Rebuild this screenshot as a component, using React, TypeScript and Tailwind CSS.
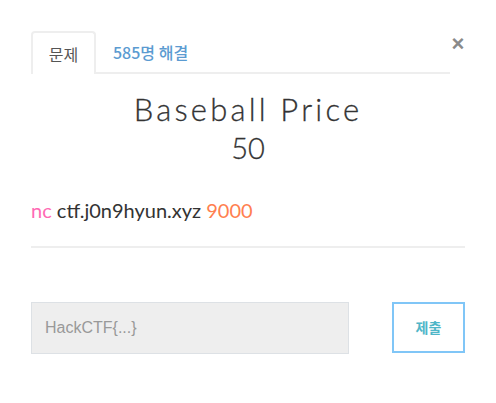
const ChallengeModal = () => {
  return (
    <div className="w-[496px] h-[403px] bg-white px-[31px] pt-[31px] font-['Lato','Noto_Sans_CJK_KR',sans-serif]">
      <div className="flex">
        <ul className="flex flex-1 border-b-2 border-[#eeeeee]">
          <li className="-mb-[2px] flex h-[43px] w-[65px] items-center justify-center rounded-t border-2 border-b-0 border-[#eeeeee] bg-white text-[16px] text-[#555555] font-['Noto_Sans_CJK_KR',sans-serif]">
            문제
          </li>
          <li className="flex h-[41px] items-center pl-[17px] text-[16px] font-medium text-[#5b9bd1] font-['Noto_Sans_CJK_KR',sans-serif]">
            585명 해결
          </li>
        </ul>
        <button className="ml-[1px] h-[24px] w-[14px] pt-[2px] text-[22px] font-bold leading-[20px] text-[#8a8a8a] font-['Liberation_Sans',sans-serif]">
          ×
        </button>
      </div>

      <h3 className="mt-[17px] text-center text-[31px] font-light leading-[36px] tracking-[3.2px] text-[#333333] [-webkit-text-stroke:0.3px_#333333]">
        Baseball Price
      </h3>
      <p className="mt-[4px] text-center text-[29px] font-light leading-[34px] text-[#333333] [-webkit-text-stroke:0.3px_#333333]">50</p>

      <p className="mt-[33px] text-[20px] leading-[24px] text-[#333333]">
        <span className="text-[#ff69b4]">nc</span> ctf.j0n9hyun.xyz{' '}
        <span className="text-[#ff7f50]">9000</span>
      </p>
      <hr className="mt-[24px] border-t-2 border-[#eeeeee]" />

      <form className="mt-[54px] flex items-start justify-between" onSubmit={(e) => e.preventDefault()}>
        <input
          title="flag"
          type="text"
          placeholder="HackCTF{...}"
          className="h-[52px] w-[318px] border border-[#dde1e5] bg-[#eeeeee] px-[13px] text-[16px] text-[#555555] outline-none placeholder:text-[#999999] font-['Liberation_Sans',sans-serif]"
        />
        <button
          type="submit"
          className="h-[51px] w-[73px] border-2 border-[#80c6f7] bg-white text-[14px] font-bold text-[#4fb6c8] font-['Noto_Sans_CJK_KR',sans-serif]"
        >
          제출
        </button>
      </form>
    </div>
  );
};

export default ChallengeModal;
